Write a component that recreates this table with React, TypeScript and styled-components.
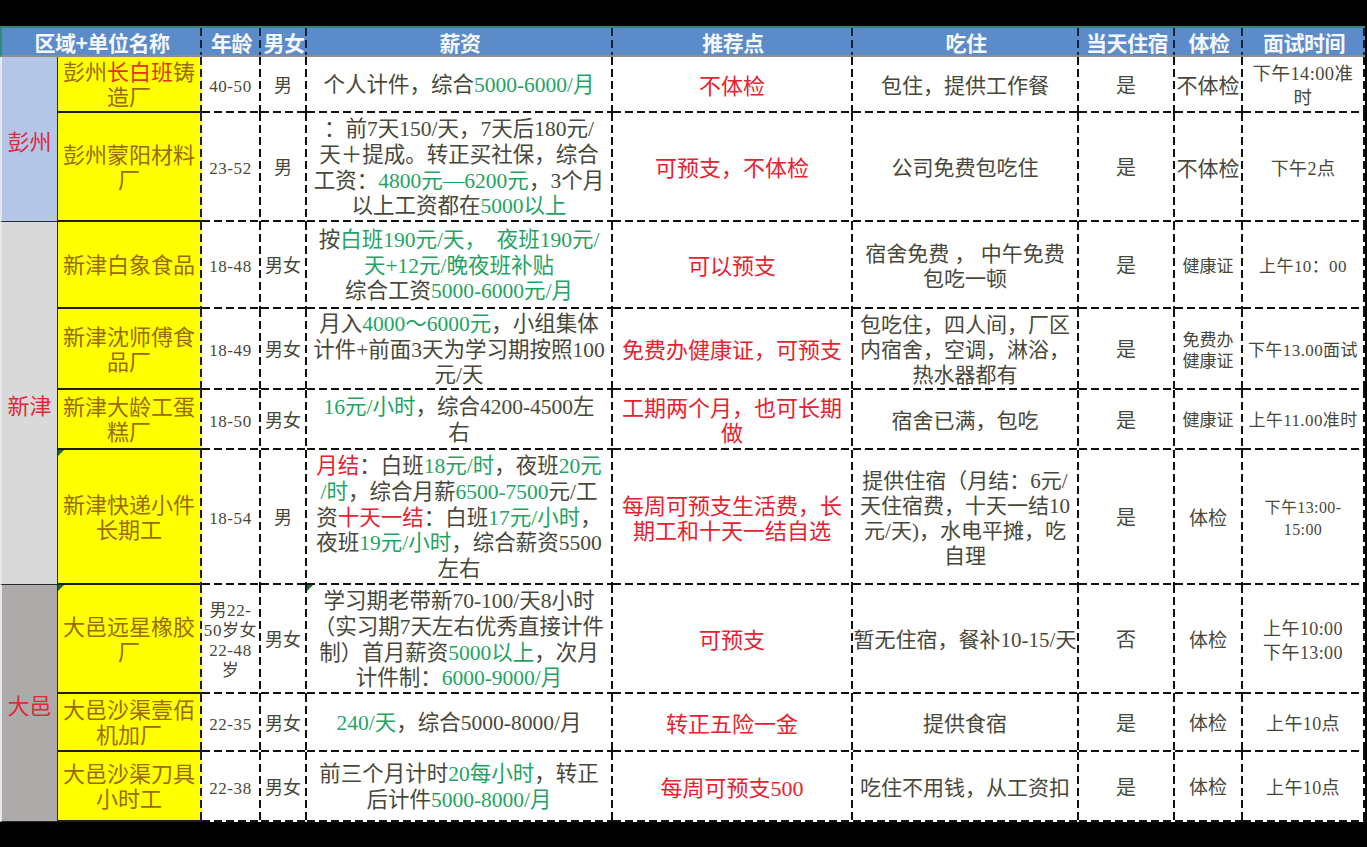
import React from 'react';
import styled, { createGlobalStyle, css } from 'styled-components';

const GlobalStyle = createGlobalStyle`
  html, body {
    margin: 0;
    padding: 0;
    background: #000;
    overflow: hidden;
  }
  * {
    box-sizing: border-box;
  }
`;

const FONT = '"Liberation Serif", "Noto Sans CJK SC", serif';
const TEXT = '#48483a';
const GREEN = '#1fa463';
const RED = '#e8212f';

const dashH = (c: string) => `repeating-linear-gradient(to right, ${c} 0 8px, transparent 8px 12px)`;
const dashV = (c: string) => `repeating-linear-gradient(to bottom, ${c} 0 8px, transparent 8px 12px)`;

const dashedEdges = (c: string, bottom = true) => css`
  background-image: ${bottom ? `${dashH(c)}, ` : ''}${dashV(c)};
  background-size: ${bottom ? '100% 2px, ' : ''}2px 100%;
  background-position: ${bottom ? 'left bottom, ' : ''}right top;
  background-repeat: no-repeat;
`;

const Page = styled.div`
  width: 1367px;
  height: 847px;
  padding-top: 26px;
  background: #000;
  font-family: ${FONT};
`;

const Sheet = styled.div`
  display: grid;
  width: 1365px;
  grid-template-columns: 58px 144px 59px 46px 306px 240px 226px 96px 68px 122px;
  grid-template-rows: 31px 56px 109px 87px 81px 60px 135px 109px 58px 70px;
`;

const HeaderCell = styled.div<{ $span?: number; $first?: boolean }>`
  grid-column: span ${(p) => p.$span || 1};
  display: flex;
  align-items: center;
  justify-content: center;
  background-color: #5b8bc9;
  border-top: 2px solid #2e8b78;
  border-bottom: 2px solid #8d8d8d;
  ${(p) => p.$first && 'border-left: 2px solid #2e8b78;'}
  ${dashedEdges('#15233a', false)}
  color: #f4f7fc;
  font-family: "Noto Sans CJK SC", sans-serif;
  font-weight: 700;
  font-size: 21px;
  white-space: nowrap;
  letter-spacing: -0.5px;
`;

const RegionCell = styled.div<{ $rows: number; $bg: string }>`
  grid-row: span ${(p) => p.$rows};
  display: flex;
  align-items: center;
  justify-content: center;
  background: ${(p) => p.$bg};
  border-left: 2px solid #e4e7ec;
  border-right: 1px solid #2a2a2a;
  border-bottom: 1px solid #2a2a2a;
  color: #e0283a;
  font-size: 22px;
  padding-top: 2px;
`;

const Flag = css`
  &::after {
    content: '';
    position: absolute;
    left: 0;
    top: 0;
    border-top: 6px solid #1d6b34;
    border-right: 6px solid transparent;
  }
`;

const NameCell = styled.div<{ $flag?: boolean }>`
  position: relative;
  display: flex;
  align-items: center;
  justify-content: center;
  text-align: center;
  padding: 2px 2px 0 0;
  background-color: #ffff00;
  border-bottom: 2px solid #1e1e1e;
  ${dashedEdges('#1e1e1e', false)}
  color: #9a6a00;
  font-size: 22px;
  line-height: 25px;
  white-space: nowrap;
  ${(p) => p.$flag && Flag}
`;

const Cell = styled.div<{ $size?: number; $lh?: number; $red?: boolean; $ls?: number; $flag?: boolean }>`
  position: relative;
  display: flex;
  align-items: center;
  justify-content: center;
  text-align: center;
  padding: 2px 2px 0 0;
  background-color: #fff;
  ${dashedEdges('#111')}
  color: ${(p) => (p.$red ? RED : TEXT)};
  font-size: ${(p) => p.$size || 21}px;
  line-height: ${(p) => p.$lh || 25}px;
  letter-spacing: ${(p) => p.$ls || 0}px;
  white-space: nowrap;
  overflow: hidden;
  ${(p) => p.$flag && Flag}
`;

const G = styled.span`
  color: ${GREEN};
`;

const R = styled.span<{ $tone?: string }>`
  color: ${(p) => p.$tone || RED};
`;

const Age = (p: { children: React.ReactNode; lh?: number }) => (
  <Cell $size={17} $ls={0.6} $lh={p.lh}>
    <div>{p.children}</div>
  </Cell>
);

const Sex = (p: { children: React.ReactNode }) => (
  <Cell $size={18}>
    <div>{p.children}</div>
  </Cell>
);

const Pay = (p: { children: React.ReactNode; flag?: boolean }) => (
  <Cell $size={21.5} $lh={25.8} $flag={p.flag}>
    <div>{p.children}</div>
  </Cell>
);

const Pick = (p: { children: React.ReactNode }) => (
  <Cell $size={22} $red>
    <div>{p.children}</div>
  </Cell>
);

const Food = (p: { children: React.ReactNode }) => (
  <Cell $size={21}>
    <div>{p.children}</div>
  </Cell>
);

const Stay = (p: { children: React.ReactNode }) => (
  <Cell $size={20}>
    <div>{p.children}</div>
  </Cell>
);

const Check = (p: { children: React.ReactNode; size?: number; lh?: number }) => (
  <Cell $size={p.size || 19} $lh={p.lh || 22}>
    <div>{p.children}</div>
  </Cell>
);

const Time = (p: { children: React.ReactNode; size?: number; lh?: number }) => (
  <Cell $size={p.size || 18} $lh={p.lh || 24} $ls={0.4}>
    <div>{p.children}</div>
  </Cell>
);

export default function App() {
  return (
    <Page>
      <GlobalStyle />
      <Sheet>
        <HeaderCell $span={2} $first>区域+单位名称</HeaderCell>
        <HeaderCell>年龄</HeaderCell>
        <HeaderCell>男女</HeaderCell>
        <HeaderCell>薪资</HeaderCell>
        <HeaderCell>推荐点</HeaderCell>
        <HeaderCell>吃住</HeaderCell>
        <HeaderCell>当天住宿</HeaderCell>
        <HeaderCell>体检</HeaderCell>
        <HeaderCell>面试时间</HeaderCell>

        {/* 彭州 */}
        <RegionCell $rows={2} $bg="#b4c6e7">彭州</RegionCell>
        <NameCell>
          <div>
            彭州<R $tone="#e8301e">长白班</R>铸<br />造厂
          </div>
        </NameCell>
        <Age>40-50</Age>
        <Sex>男</Sex>
        <Pay>
          个人计件，综合<G>5000-6000/月</G>
        </Pay>
        <Pick>不体检</Pick>
        <Food>包住，提供工作餐</Food>
        <Stay>是</Stay>
        <Check size={21}>不体检</Check>
        <Time size={18.5}>
          下午14:00准<br />时
        </Time>

        <NameCell>
          <div>
            彭州蒙阳材料<br />厂
          </div>
        </NameCell>
        <Age>23-52</Age>
        <Sex>男</Sex>
        <Pay>
          ：前7天150/天，7天后180元/
          <br />
          天＋提成。转正买社保，综合
          <br />
          工资：<G>4800元—6200元</G>，3个月
          <br />
          以上工资都在<G>5000以上</G>
        </Pay>
        <Pick>可预支，不体检</Pick>
        <Food>公司免费包吃住</Food>
        <Stay>是</Stay>
        <Check size={21}>不体检</Check>
        <Time>下午2点</Time>

        {/* 新津 */}
        <RegionCell $rows={4} $bg="#d9d9d9">新津</RegionCell>
        <NameCell>
          <div>新津白象食品</div>
        </NameCell>
        <Age>18-48</Age>
        <Sex>男女</Sex>
        <Pay>
          按<G>白班190元/天，&nbsp;&nbsp;夜班190元/</G>
          <br />
          <G>天+12元/晚夜班补贴</G>
          <br />
          综合工资<G>5000-6000元/月</G>
        </Pay>
        <Pick>可以预支</Pick>
        <Food>
          宿舍免费 ， 中午免费
          <br />
          包吃一顿
        </Food>
        <Stay>是</Stay>
        <Check size={17}>健康证</Check>
        <Time size={17}>上午10：00</Time>

        <NameCell>
          <div>
            新津沈师傅食<br />品厂
          </div>
        </NameCell>
        <Age>18-49</Age>
        <Sex>男女</Sex>
        <Pay>
          月入<G>4000～6000元</G>，小组集体
          <br />
          计件+前面3天为学习期按照100
          <br />
          元/天
        </Pay>
        <Pick>免费办健康证，可预支</Pick>
        <Food>
          包吃住，四人间，厂区
          <br />
          内宿舍，空调，淋浴，
          <br />
          热水器都有
        </Food>
        <Stay>是</Stay>
        <Check size={17} lh={21}>
          免费办
          <br />
          健康证
        </Check>
        <Time size={17}>下午13.00面试</Time>

        <NameCell>
          <div>
            新津大龄工蛋<br />糕厂
          </div>
        </NameCell>
        <Age>18-50</Age>
        <Sex>男女</Sex>
        <Pay>
          <G>16元/小时</G>，综合4200-4500左
          <br />右
        </Pay>
        <Pick>
          工期两个月，也可长期
          <br />做
        </Pick>
        <Food>宿舍已满，包吃</Food>
        <Stay>是</Stay>
        <Check size={17}>健康证</Check>
        <Time size={17}>上午11.00准时</Time>

        <NameCell $flag>
          <div>
            新津快递小件<br />长期工
          </div>
        </NameCell>
        <Age>18-54</Age>
        <Sex>男</Sex>
        <Pay>
          <R>月结</R>：白班<G>18元/时</G>，夜班<G>20元</G>
          <br />
          <G>/时</G>，综合月薪<G>6500-7500</G>元/工
          <br />
          资<R>十天一结</R>：白班<G>17元/小时</G>，
          <br />
          夜班<G>19元/小时</G>，综合薪资5500
          <br />
          左右
        </Pay>
        <Pick>
          每周可预支生活费，长
          <br />
          期工和十天一结自选
        </Pick>
        <Food>
          提供住宿（月结：6元/
          <br />
          天住宿费，十天一结10
          <br />
          元/天)，水电平摊，吃
          <br />
          自理
        </Food>
        <Stay>是</Stay>
        <Check>体检</Check>
        <Time size={16} lh={22}>
          下午13:00-
          <br />
          15:00
        </Time>

        {/* 大邑 */}
        <RegionCell $rows={3} $bg="#aeaaaa">大邑</RegionCell>
        <NameCell $flag>
          <div>
            大邑远星橡胶<br />厂
          </div>
        </NameCell>
        <Age lh={20}>
          男22-
          <br />
          50岁女
          <br />
          22-48
          <br />岁
        </Age>
        <Sex>男女</Sex>
        <Pay flag>
          学习期老带新70-100/天8小时
          <br />
          （实习期7天左右优秀直接计件
          <br />
          制）首月薪资<G>5000以上</G>，次月
          <br />
          计件制：<G>6000-9000/月</G>
        </Pay>
        <Pick>可预支</Pick>
        <Food>暂无住宿，餐补10-15/天</Food>
        <Stay>否</Stay>
        <Check>体检</Check>
        <Time>
          上午10:00
          <br />
          下午13:00
        </Time>

        <NameCell>
          <div>
            大邑沙渠壹佰<br />机加厂
          </div>
        </NameCell>
        <Age>22-35</Age>
        <Sex>男女</Sex>
        <Pay>
          <G>240/天</G>，综合5000-8000/月
        </Pay>
        <Pick>转正五险一金</Pick>
        <Food>提供食宿</Food>
        <Stay>是</Stay>
        <Check>体检</Check>
        <Time>上午10点</Time>

        <NameCell>
          <div>
            大邑沙渠刀具<br />小时工
          </div>
        </NameCell>
        <Age>22-38</Age>
        <Sex>男女</Sex>
        <Pay>
          前三个月计时<G>20每小时</G>，转正
          <br />
          后计件<G>5000-8000/月</G>
        </Pay>
        <Pick>每周可预支500</Pick>
        <Food>吃住不用钱，从工资扣</Food>
        <Stay>是</Stay>
        <Check>体检</Check>
        <Time>上午10点</Time>
      </Sheet>
    </Page>
  );
}
